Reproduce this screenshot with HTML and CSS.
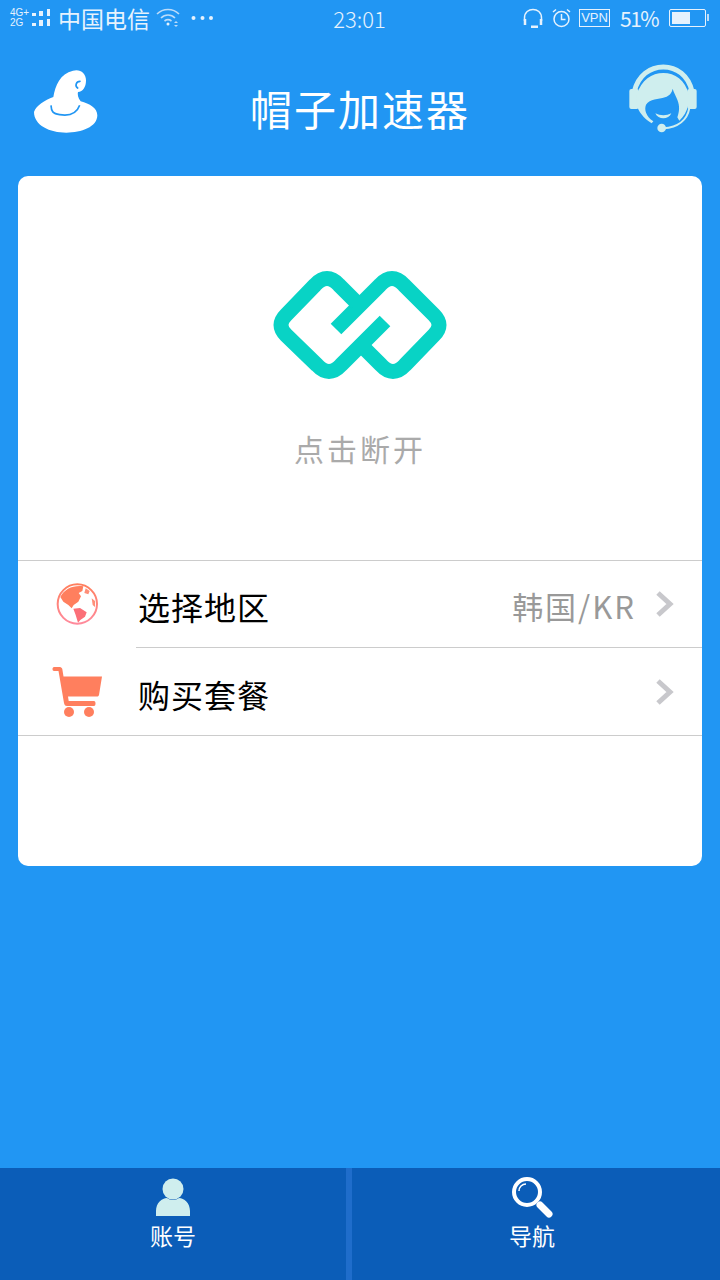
FILE: index.html
```html
<!DOCTYPE html>
<html>

<head>
    <meta charset="UTF-8">
    <title>帽子加速器</title>
    <link rel="stylesheet" href="styles.css">
</head>

<body>
    <div class="page">
        <div class="status">
            <div class="status-side">
                <div class="net"><span>4G<i>+</i></span><span>2G</span></div>
                <svg class="bars" width="18" height="18" viewBox="0 0 18 18">
                    <path fill="#e6f2fd" d="M0 4h4v3H0zM0 14h4v3H0zM7 2h4v5H7zM7 11h4v6H7zM15 0h3v7h-3zM15 10h3v7h-3z" />
                </svg>
                <span class="carrier">中国电信</span>
                <svg class="wifi" width="24" height="20" viewBox="0 0 24 20" fill="none" stroke="#bcdcfa" stroke-width="1.600">
                    <path d="M1 6C7 0 17 0 23 6" />
                    <path d="M5 10C9 6 15 6 19 10" />
                    <path d="M8.500 13C10.500 11.500 13.500 11.500 15.500 13" />
                    <circle cx="12" cy="16" r="1.500" fill="#e6f2fd" stroke="none" />
                    <path d="M20 13l2 2h-4zM20 19l2-2h-4z" fill="#bcdcfa" stroke="none" />
                </svg>
                <svg class="dots" width="22" height="6" viewBox="0 0 22 6" fill="#e6f2fd">
                    <circle cx="2.500" cy="3" r="2" />
                    <circle cx="11.500" cy="3" r="2" />
                    <circle cx="20" cy="3" r="2" />
                </svg>
            </div>
            <span class="time">23:01</span>
            <div class="status-side status-right">
                <svg width="20" height="20" viewBox="0 0 20 20" fill="none" stroke="#e6f2fd" stroke-width="1.500">
                    <path d="M1.500 13V10C1.500 -1.500 18.500 -1.500 18.500 10V13" />
                    <path d="M2 11v6M18 11v6M8 18.800h7" stroke-width="2.500" />
                </svg>
                <svg class="alarm" width="19" height="20" viewBox="0 0 19 20" fill="none" stroke="#e6f2fd" stroke-width="1.500">
                    <circle cx="9.500" cy="11" r="7.500" />
                    <path d="M9.500 6v5.500h4M1 4l3-2.500M18 4l-3-2.500" />
                </svg>
                <span class="vpn">VPN</span>
                <span class="percent">51%</span>
                <div class="battery">
                    <div class="battery-body">
                        <div class="battery-fill"></div>
                    </div>
                    <div class="battery-tip"></div>
                </div>
            </div>
        </div>

        <div class="header">
            <svg class="hat" width="80" height="80" viewBox="0 0 240 240">
                <path fill="#fff" d="M18 150C25 130 50 115 76 105C82 70 96 35 135 26C155 20 174 32 174 55C174 75 165 90 150 90C148 96 150 108 158 118C185 125 208 138 208 160C208 195 160 212 115 212C65 212 18 190 18 150Z" />
                <path fill="none" stroke="#2196f3" stroke-width="5" stroke-linecap="round" d="M156 58C144 58 140 72 149 78" />
                <path fill="none" stroke="#2196f3" stroke-width="5" d="M69 130C70 148 74 155 95 158C120 162 145 158 155 130" />
            </svg>
            <h1 class="title">帽子加速器</h1>
            <svg class="agent" width="86" height="80" viewBox="0 0 258 240">
                <rect x="28" y="93" width="28" height="60" rx="6" fill="#cfeeee" />
                <rect x="202" y="93" width="28" height="60" rx="6" fill="#cfeeee" />
                <path fill="none" stroke="#cfeeee" stroke-width="15" d="M43 100C55 52 90 27 130 27C170 27 205 52 216 100" />
                <path fill="#cfeeee" d="M50 110C65 65 95 45 130 45C165 45 195 65 207 110L205 140C200 160 192 175 178 188L172 178C178 160 180 145 172 125C168 115 160 100 158 92C155 105 150 112 135 118C115 125 90 122 78 140C72 155 78 175 100 190L95 196C70 180 55 160 50 140Z" />
                <path fill="#cfeeee" d="M106 166C120 174 140 174 154 166C146 186 114 186 106 166Z" />
                <path fill="none" stroke="#cfeeee" stroke-width="6" d="M208 150C202 185 175 208 130 211" />
                <circle cx="125" cy="210" r="13" fill="#cfeeee" />
            </svg>
        </div>

        <div class="card">
            <div class="connect">
                <svg class="logo" width="178" height="114" viewBox="270 268 178 114" fill="none" stroke="#08d3c5" stroke-width="15">
                    <path d="M335 329L379 285Q391 272 403 285L433 315Q443 325 433 335L404 365Q392 378 380 365L362 347" />
                    <path d="M384 321L340 365Q328 378 316 365L285 335Q275 325 285 315L314 285Q326 272 338 285L356 303" />
                </svg>
                <div class="connect-text">点击断开</div>
            </div>
            <div class="list">
                <div class="row">
                    <div class="row-icon">
                        <svg width="64" height="60" viewBox="0 0 192 180">
                            <defs>
                                <linearGradient id="globe" x1="0" y1="0" x2="0" y2="1">
                                    <stop offset="0" stop-color="#ff7f5e" />
                                    <stop offset="1" stop-color="#ff8a9c" />
                                </linearGradient>
                            </defs>
                            <circle cx="97" cy="87" r="59" fill="#fff" stroke="url(#globe)" stroke-width="6" />
                            <path fill="#ff7f5e" d="M46 66C58 42 85 30 115 34L112 48L101 54L108 64L100 80L86 90L80 100L70 90L55 80Z" />
                            <path fill="#fb6f78" d="M85 101L105 99L125 112L120 125L106 135L99 143L92 120Z" />
                            <path fill="#ff8f78" d="M122 40L134 48L130 58L118 54ZM140 70L150 78L150 96L143 90Z" />
                        </svg>
                    </div>
                    <div class="row-body row-line">
                        <span class="row-label">选择地区</span>
                        <span class="row-value">韩国/KR</span>
                        <svg class="chev" width="18" height="26" viewBox="0 0 18 26" fill="none" stroke="#c8c8cc" stroke-width="5">
                            <path d="M2 2L14 13L2 24" />
                        </svg>
                    </div>
                </div>
                <div class="row">
                    <div class="row-icon">
                        <svg width="54" height="54" viewBox="50 664 54 54">
                            <path fill="#ff7f5e" d="M54 666H60C61 666 62 667 62.300 668L63.500 675.500H102L99 694C98.500 695 98 695.500 97 695.500H68L68.700 700H94C96 700 96 705 94 705H67C65 705 64.500 704 64 702L58.500 670H54C52 670 52 666 54 666Z" />
                            <circle cx="69" cy="711" r="5" fill="#ff7f5e" />
                            <circle cx="89" cy="711" r="5" fill="#ff7f5e" />
                        </svg>
                    </div>
                    <div class="row-body">
                        <span class="row-label">购买套餐</span>
                        <svg class="chev" width="18" height="26" viewBox="0 0 18 26" fill="none" stroke="#c8c8cc" stroke-width="5">
                            <path d="M2 2L14 13L2 24" />
                        </svg>
                    </div>
                </div>
            </div>
        </div>

        <div class="tabs">
            <div class="tab tab-left">
                <svg width="36" height="40" viewBox="0 0 36 40">
                    <circle cx="18" cy="11" r="10.500" fill="#cfeeee" />
                    <path fill="#cfeeee" d="M1 38V33C1 25 7 20 12 20C15 22.500 21 22.500 24 20C29 20 35 25 35 33V38Z" />
                </svg>
                <span class="tab-text">账号</span>
            </div>
            <div class="tab tab-right">
                <svg width="42" height="42" viewBox="0 0 42 42" fill="none" stroke="#fff">
                    <circle cx="16" cy="16" r="13" stroke-width="4" />
                    <path d="M8 15C8 11 11 8 15 8" stroke-width="1.500" />
                    <path d="M29 29L38 38" stroke-width="7" stroke-linecap="round" />
                </svg>
                <span class="tab-text">导航</span>
            </div>
        </div>
    </div>
</body>

</html>
```

FILE: styles.css
```css
* {
    margin: 0;
    padding: 0;
    box-sizing: border-box;
}

body {
    font-family: "Noto Sans CJK SC", "Noto Sans", sans-serif;
    background: #2196f3;
}

svg {
    display: block;
    flex: none;
}

.page {
    width: 720px;
    height: 1280px;
    display: flex;
    flex-direction: column;
    overflow: hidden;
}

/* status bar */
.status {
    height: 38px;
    padding: 0 11px 3px 10px;
    display: flex;
    align-items: center;
    color: #e6f2fd;
}

.status-side {
    flex: 1;
    display: flex;
    align-items: center;
}

.status-right {
    justify-content: flex-end;
}

.net {
    width: 22px;
    display: flex;
    flex-direction: column;
    font: 10px/10px "Liberation Sans", sans-serif;
}

.net i {
    font-style: normal;
}

.bars {
    margin-right: 8px;
}

.carrier {
    font-size: 23px;
    line-height: 30px;
}

.wifi {
    margin-left: 6px;
}

.dots {
    margin-left: 11px;
    margin-right: 4px;
}

.time {
    font-size: 22px;
    line-height: 30px;
    font-weight: 300;
}

.alarm {
    margin-left: 9px;
}

.vpn {
    margin-left: 8px;
    width: 31px;
    height: 18px;
    border: 1px solid #e6f2fd;
    font: 13px/16px "Liberation Sans", sans-serif;
    text-align: center;
}

.percent {
    margin-left: 10px;
    width: 49px;
    font-size: 21px;
    line-height: 30px;
    letter-spacing: -1.500px;
    white-space: nowrap;
}

.battery {
    display: flex;
    align-items: center;
    gap: 1px;
}

.battery-body {
    width: 37px;
    height: 18px;
    padding: 2px;
    border: 1px solid #e6f2fd;
    border-radius: 2px;
}

.battery-fill {
    width: 18px;
    height: 100%;
    background: #e6f2fd;
}

.battery-tip {
    width: 2px;
    height: 7px;
    background: #bcdcfa;
}

/* header */
.header {
    height: 138px;
    padding: 0 14px;
    display: grid;
    grid-template-columns: 1fr auto 1fr;
    align-items: start;
}

.hat {
    margin: 24px 0 0 14px;
}

.agent {
    margin-top: 20px;
    justify-self: end;
}

.title {
    margin-top: 40px;
    font-size: 42px;
    line-height: 60px;
    font-weight: 400;
    letter-spacing: 2px;
    color: #fff;
    white-space: nowrap;
}

/* card */
.card {
    height: 690px;
    margin: 0 18px;
    background: #fff;
    border-radius: 10px;
}

.connect {
    height: 384px;
    padding-top: 92px;
    display: flex;
    flex-direction: column;
    align-items: center;
}

.connect-text {
    margin-top: 44px;
    font-size: 30px;
    line-height: 44px;
    letter-spacing: 3px;
    color: #aaaaaa;
}

.list {
    border-top: 1px solid #cccccc;
    border-bottom: 1px solid #cccccc;
}

.row {
    display: flex;
    height: 87px;
}

.row-icon {
    width: 118px;
    display: flex;
    align-items: center;
    justify-content: center;
}

.row-body {
    flex: 1;
    padding: 0 28px 0 2px;
    display: flex;
    align-items: center;
}

.row-line {
    border-bottom: 1px solid #cccccc;
}

.row-label {
    flex: 1;
    padding-top: 4px;
    font-size: 32px;
    letter-spacing: 1px;
    color: #000;
}

.row-value {
    margin-right: 20px;
    padding-top: 2px;
    font-size: 31px;
    letter-spacing: 2px;
    color: #999999;
}

/* bottom tabs */
.tabs {
    margin-top: auto;
    height: 112px;
    display: flex;
    background: #0b5db8;
}

.tab {
    display: flex;
    flex-direction: column;
    align-items: center;
}

.tab-left {
    width: 346px;
    padding-top: 10px;
}

.tab-right {
    flex: 1;
    padding: 8px 8px 0 0;
    border-left: 6px solid #1f6dcb;
}

.tab-text {
    font-size: 23px;
    line-height: 34px;
    color: #fff;
}
```
